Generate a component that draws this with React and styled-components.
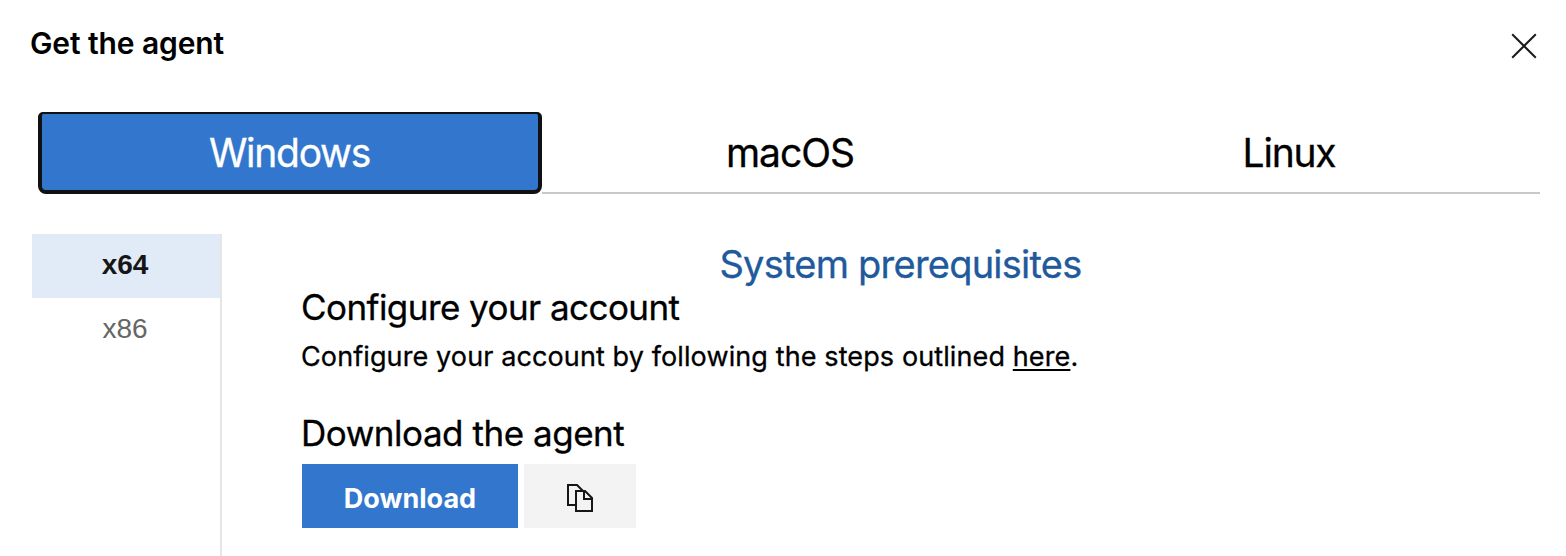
import React from "react";
import styled, { createGlobalStyle } from "styled-components";

const Global = createGlobalStyle`
  * { box-sizing: border-box; }
  body { margin: 0; background: #fff; color: #000; font-family: Inter, "Liberation Sans", sans-serif; font-weight: 400; overflow: hidden; }
  button { font-family: inherit; font-weight: inherit; border: 0; padding: 0; margin: 0; background: none; cursor: pointer; }
`;

const Dialog = styled.main`
  height: 556px;
  display: flex;
  flex-direction: column;
  overflow: hidden;
`;

const Header = styled.header`
  height: 112px;
  flex: none;
  padding: 23px 29px 0 30px;
  display: flex;
  justify-content: space-between;
  align-items: flex-start;
`;

const Label = styled.span`
  display: inline-block;
  white-space: nowrap;
  letter-spacing: ${(p) => p.$spacing || 0}px;
  -webkit-text-stroke: ${(p) => (p.$firm ? "0.3px currentColor" : "0")};
`;

const Title = styled.h1`
  margin: 0;
  font-size: 30px;
  line-height: 40px;
  font-weight: 600;
`;

const CloseButton = styled.button`
  width: 26px;
  height: 26px;
  margin-top: 10px;
  svg { display: block; }
`;

const Tabs = styled.nav`
  height: 82px;
  margin: 0 26px 0 38px;
  display: flex;
  flex: none;
`;

const Tab = styled.button`
  flex: ${(p) => (p.$active ? "0 0 504px" : "1 1 0")};
  height: 82px;
  padding: ${(p) => (p.$active ? "2px 1px 0 0" : "1px 3px 0 0")};
  font-size: 39px;
  line-height: 46px;
  color: ${(p) => (p.$active ? "#fff" : "#000")};
  background: ${(p) => (p.$active ? "#3277cd" : "#fff")};
  border: ${(p) => (p.$active ? "solid #111" : "0 solid #c8c8c8")};
  border-width: ${(p) => (p.$active ? "2px 4px 4px" : "0 0 2px")};
  border-radius: ${(p) => (p.$active ? "5px 5px 8px 8px" : "0")};
`;

const Body = styled.div`
  flex: 1;
  display: flex;
  padding: 40px 0 0 32px;
`;

const Side = styled.aside`
  width: 190px;
  border-right: 2px solid #e6e6e6;
`;

const Arch = styled.button`
  display: block;
  width: 188px;
  height: 64px;
  padding: 0 2px 3px 0;
  font-family: "Liberation Sans", Arial, sans-serif;
  font-size: 28px;
  font-weight: ${(p) => (p.$active ? 700 : 400)};
  color: ${(p) => (p.$active ? "#161616" : "#666")};
  background: ${(p) => (p.$active ? "#e1ebf7" : "#fff")};
`;

const Content = styled.section`
  flex: 1;
  padding: 8px 26px 0 80px;
`;

const Prereq = styled.a`
  display: block;
  width: 1197px;
  text-align: center;
  font-size: 38px;
  line-height: 45px;
  height: 43px;
  color: #215a9c;
`;

const Heading = styled.h2`
  margin: ${(p) => p.$top || 0}px 0 0 -1px;
  font-size: 35px;
  line-height: 44px;
  font-weight: inherit;
`;

const Paragraph = styled.p`
  margin: 10px 0 0 -1px;
  font-size: 27px;
  line-height: 36px;
  a {
    color: #000;
    text-decoration: underline;
    text-decoration-thickness: 2px;
    text-underline-offset: 3px;
  }
`;

const Actions = styled.div`
  display: flex;
  gap: 6px;
  margin-top: 9px;
`;

const Download = styled.button`
  width: 216px;
  height: 64px;
  padding-top: 4px;
  background: #3277cd;
  color: #fff;
  font-size: 27px;
  font-weight: 700;
`;

const Copy = styled.button`
  width: 112px;
  height: 64px;
  padding-top: 4px;
  background: #f3f3f3;
  display: flex;
  align-items: center;
  justify-content: center;
`;

export default function App() {
  return (
    <>
      <Global />
      <Dialog>
        <Header>
          <Title><Label $spacing={-0.1}>Get the agent</Label></Title>
          <CloseButton aria-label="Close">
            <svg width="26" height="26" viewBox="0 0 26 26" fill="none" stroke="#1b1b1b" strokeWidth="2"><path d="M1.2 1.2l23.6 23.6M24.8 1.2L1.2 24.8" /></svg>
          </CloseButton>
        </Header>
        <Tabs>
          <Tab $active><Label $firm $spacing={-1.25}>Windows</Label></Tab>
          <Tab><Label $firm $spacing={-1}>macOS</Label></Tab>
          <Tab><Label $firm $spacing={-1.2}>Linux</Label></Tab>
        </Tabs>
        <Body>
          <Side>
            <Arch $active>x64</Arch>
            <Arch>x86</Arch>
          </Side>
          <Content>
            <Prereq><Label $firm $spacing={-0.77}>System prerequisites</Label></Prereq>
            <Heading><Label $firm $spacing={-0.56}>Configure your account</Label></Heading>
            <Paragraph><Label $firm $spacing={0.11}>Configure your account by following the steps outlined <a href="#here">here</a>.</Label></Paragraph>
            <Heading $top={36}><Label $firm $spacing={-0.47}>Download the agent</Label></Heading>
            <Actions>
              <Download><Label>Download</Label></Download>
              <Copy aria-label="Copy">
                <svg width="28" height="30" viewBox="0 0 28 30" fill="none" stroke="#161616" strokeWidth="2"><path d="M10 22H2V2h9l6 6M10 8h9l7 7v13H10zM18 8v8h8" /></svg>
              </Copy>
            </Actions>
          </Content>
        </Body>
      </Dialog>
    </>
  );
}
